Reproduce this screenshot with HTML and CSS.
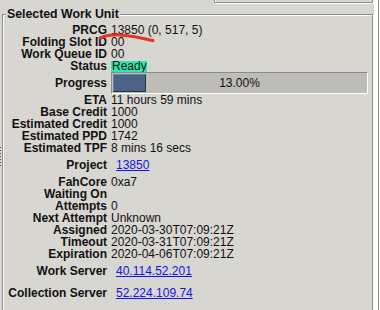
FILE: index.html
```html
<!DOCTYPE html>
<html lang="en">
	<head>
		<meta charset="UTF-8" />
		<title>Selected Work Unit</title>
		<link rel="stylesheet" href="styles.css">
	</head>
	<body>
		<div class="top-pane"></div>

		<fieldset class="unit">
			<legend>Selected Work Unit</legend>

			<div class="grid">
				<div class="label">PRCG</div>
				<div class="value">13850 (0, 517, 5)</div>

				<div class="label">Folding Slot ID</div>
				<div class="value">00</div>

				<div class="label">Work Queue ID</div>
				<div class="value">00</div>

				<div class="label">Status</div>
				<div class="value"><span class="status">Ready</span></div>

				<div class="label tall">Progress</div>
				<div class="value tall">
					<div class="progress">
						<div class="progress-fill" style="width: 13%"></div>
						<span class="progress-text">13.00%</span>
					</div>
				</div>

				<div class="label">ETA</div>
				<div class="value">11 hours 59 mins</div>

				<div class="label">Base Credit</div>
				<div class="value">1000</div>

				<div class="label">Estimated Credit</div>
				<div class="value">1000</div>

				<div class="label">Estimated PPD</div>
				<div class="value">1742</div>

				<div class="label">Estimated TPF</div>
				<div class="value">8 mins 16 secs</div>

				<div class="label tall">Project</div>
				<div class="value tall"><a href="#" class="link">13850</a></div>

				<div class="label">FahCore</div>
				<div class="value">0xa7</div>

				<div class="label">Waiting On</div>
				<div class="value"></div>

				<div class="label">Attempts</div>
				<div class="value">0</div>

				<div class="label">Next Attempt</div>
				<div class="value">Unknown</div>

				<div class="label">Assigned</div>
				<div class="value">2020-03-30T07:09:21Z</div>

				<div class="label">Timeout</div>
				<div class="value">2020-03-31T07:09:21Z</div>

				<div class="label">Expiration</div>
				<div class="value">2020-04-06T07:09:21Z</div>

				<div class="label tall">Work Server</div>
				<div class="value tall"><a href="#" class="link">40.114.52.201</a></div>

				<div class="label tall">Collection Server</div>
				<div class="value tall"><a href="#" class="link">52.224.109.74</a></div>
			</div>
		</fieldset>

		<!-- red pen mark over the PRCG row -->
		<svg class="scribble" width="60" height="14" viewBox="0 0 60 14">
			<path
				d="M2 8 C 8 5.5, 15 4.5, 22 5 S 42 7.5, 52 10 L 55 10.5"
				stroke="#e8331f"
				stroke-width="3"
				stroke-linecap="round"
				fill="none"
			/>
		</svg>
	</body>
</html>
```

FILE: styles.css
```css
:root {
	--bg: #d7d6d1;
	--dark-line: #8d8c88;
	--text: #111;
	--link: #1414e6;
	--trough: #bdbcb7;
	--ready: #2ee8ad;
}

* {
	box-sizing: border-box;
}

html {
	background:
		repeating-linear-gradient(to bottom, #555 0 1px, transparent 1px 3px) 0 147px / 1px 19px no-repeat,
		linear-gradient(to right, var(--bg) 0 374px, #fff 374px 378px, #8c8b87 378px 379px, #fff 379px);
	height: 100%;
}

body {
	margin: 0;
	position: relative;
	height: 310px;
	overflow: hidden;
	font-family: "Liberation Sans", Arial, Helvetica, sans-serif;
	font-size: 12px;
	color: var(--text);
}

.top-pane {
	margin-left: 214px;
	width: 159px;
	height: 3px;
	border: 1px solid var(--dark-line);
	border-top: none;
	box-shadow: inset 1px 0 0 #fff, 1px 1px 0 #fff;
}

.unit {
	margin: 5px 0 0 2px;
	padding: 4px 0 0 0;
	width: 371px;
	height: 330px;
	min-width: 0;
	border: 1px solid var(--dark-line);
	box-shadow: inset 1px 1px 0 #fff, 1px 1px 0 #fff;
}

.unit legend {
	margin-left: 3px;
	padding: 0 1px;
	font-size: 12.3px;
	line-height: 12px;
	font-weight: bold;
	background: var(--bg);
}

.grid {
	display: grid;
	grid-template-columns: 104px 1fr;
	grid-auto-rows: minmax(12px, auto);
	column-gap: 4px;
	line-height: 12px;
}

.label {
	text-align: right;
	font-weight: bold;
	white-space: nowrap;
	align-self: center;
}

.value {
	white-space: nowrap;
	display: flex;
	align-items: center;
}

.tall {
	height: 22px;
	line-height: 22px;
}

.value.tall {
	line-height: 12px;
}

.status {
	display: inline-block;
	background: var(--ready);
	line-height: 11px;
	padding: 0 0 0 1px;
}

.progress {
	position: relative;
	width: 257px;
	height: 22px;
	background: var(--trough);
	border-top: 1px solid var(--dark-line);
	border-left: 1px solid var(--dark-line);
	border-bottom: 1px solid #fff;
	border-right: 1px solid #fff;
	padding: 1px;
	display: flex;
}

.progress-fill {
	height: 100%;
	background: #4b6486;
	border-top: 1px solid #6c83a1;
	border-left: 1px solid #6c83a1;
	border-right: 1px solid #27323f;
	border-bottom: 1px solid #27323f;
}

.progress-text {
	position: absolute;
	inset: 0;
	text-align: center;
	font-size: 12px;
	line-height: 20px;
}

.link {
	margin-left: 5px;
	color: var(--link);
	text-decoration: underline;
}

.scribble {
	position: absolute;
	left: 98px;
	top: 30px;
}
```
